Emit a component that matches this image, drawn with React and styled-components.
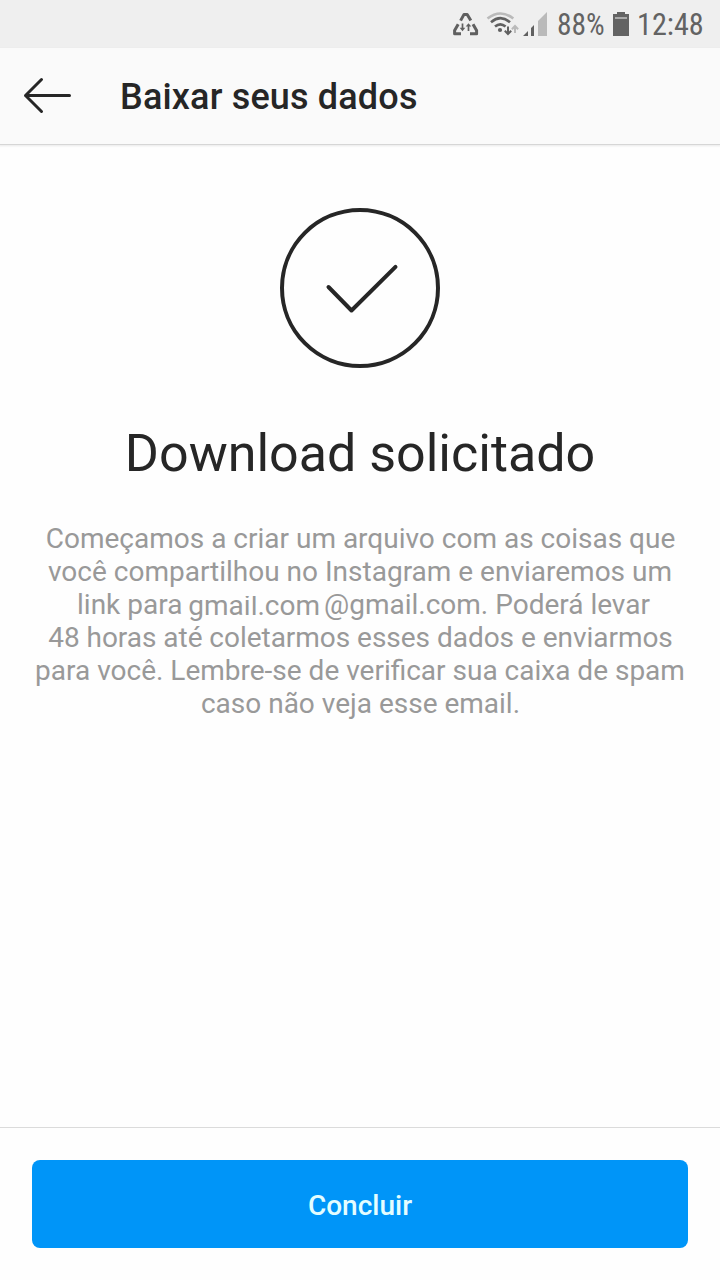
import React from "react";
import styled, { createGlobalStyle } from "styled-components";

const GlobalStyle = createGlobalStyle`
  *, *::before, *::after { box-sizing: border-box; }
  body {
    margin: 0;
    background: #fefefe;
    color: #262626;
    font-family: Roboto, "Liberation Sans", sans-serif;
  }
`;

const Screen = styled.div`
  display: flex;
  flex-direction: column;
  width: 720px;
  height: 1280px;
  overflow: hidden;
`;

const StatusBar = styled.div`
  display: flex;
  align-items: center;
  flex: none;
  height: 48px;
  padding-left: 448px;
  background: #efefef;
  color: #636363;
`;

const StatusIcons = styled.svg`
  display: block;
  flex: none;
  width: 102px;
  height: 48px;
`;

const StatusText = styled.span`
  flex: none;
  width: ${(p) => p.$width}px;
  margin-left: ${(p) => p.$gap}px;
  padding-top: 1px;
  font-family: "Roboto Condensed", Roboto, sans-serif;
  font-size: 31px;
  line-height: 48px;
  white-space: nowrap;
  transform: scaleX(${(p) => p.$scale});
  transform-origin: left center;
`;

const BatteryIcon = styled.svg`
  display: block;
  flex: none;
  width: 18px;
  height: 48px;
  margin-left: 8px;
`;

const Header = styled.header`
  display: flex;
  align-items: center;
  flex: none;
  height: 96px;
  padding-left: 22px;
  background: #fafafa;
  box-shadow: 0 1px 0 #d6d6d6, 0 1px 2px 1px #e9e9e9;
`;

const BackIcon = styled.svg`
  display: block;
  width: 50px;
  height: 96px;
`;

const Title = styled.h1`
  margin: 0 0 0 48px;
  padding-top: 2px;
  font-size: 36px;
  font-weight: 500;
  line-height: 42px;
  letter-spacing: 0.17px;
`;

const Content = styled.main`
  display: flex;
  flex-direction: column;
  align-items: center;
  flex: 1;
  padding-top: 64px;
`;

const CheckIcon = styled.svg`
  display: block;
  width: 160px;
  height: 160px;
`;

const Heading = styled.h2`
  margin: 55px 0 0;
  font-size: 52px;
  font-weight: 400;
  line-height: 62px;
`;

const Message = styled.p`
  margin: 37px 0 0;
  color: #999;
  font-size: 28px;
  line-height: 33px;
  text-align: center;
  white-space: nowrap;
`;

const MessageLine = styled.span`
  display: block;
  padding-left: ${(p) => p.$indent || 0}px;
  letter-spacing: ${(p) => p.$tracking || 0}px;
`;

const Recipient = styled.span`
  display: inline-block;
  margin: 0 4px 0 -1px;
  line-height: 33px;
  vertical-align: top;
  transform: translateY(1px);
  clip-path: inset(7px 0 0 0);
`;

const Footer = styled.footer`
  flex: none;
  height: 153px;
  padding: 32px 32px 0;
  border-top: 1px solid #dbdbdb;
`;

const DoneButton = styled.button`
  display: block;
  width: 100%;
  height: 88px;
  padding: 3px 0 0;
  border: 0;
  border-radius: 8px;
  background: #0095f8;
  color: #e4fdff;
  font: 500 28px/33px Roboto, sans-serif;
`;

export default function App() {
  return (
    <Screen>
      <GlobalStyle />
      <StatusBar>
        <StatusIcons viewBox="448 0 102 48" fill="none" stroke="#606060">
          <g strokeWidth="3" strokeLinejoin="round">
            <path d="M460.6 20.6L464 14.4H467.2L470.8 20.6" />
            <path d="M458.2 24.2L454.6 30.6V33.8H461" />
            <path d="M473 24.2L476.6 30.6V33.8H470" />
          </g>
          <path d="M462.5 23.5V29M468.5 26V31" strokeWidth="1.7" />
          <path d="M459.7 27.8H465.3L462.5 31.2ZM465.7 26.6H471.3L468.5 23.2Z" fill="#606060" stroke="none" />
          <path d="M487.5 18.5Q500.5 8.5 513.3 18.5" stroke="#bababa" strokeWidth="2.6" />
          <path d="M491 22.2Q500.5 14.2 510 22.2M495 26.6Q500.3 22.2 505.6 26.6" strokeWidth="2.6" />
          <circle cx="500" cy="30" r="2.1" fill="#606060" stroke="none" />
          <path d="M508 26.5V33M504.8 30.7L508 34L511.2 30.7" strokeWidth="2" />
          <path d="M515 33V27M511.9 29.3L515 26L518.1 29.3" stroke="#bababa" strokeWidth="2" />
          <path d="M523 36L528 31V36ZM531 28L534 25V36H531Z" fill="#606060" stroke="none" />
          <path d="M538 21L547 12V36H538Z" fill="#bababa" stroke="none" />
        </StatusIcons>
        <StatusText $gap={7} $width={48} $scale={0.95}>88%</StatusText>
        <BatteryIcon viewBox="0 0 18 48">
          <path d="M0 14H4V12H12V14H16V36H0V14Z" fill="#636363" />
          <path d="M2 18H14" stroke="#aaa" strokeWidth="2" />
        </BatteryIcon>
        <StatusText $gap={6} $width={70} $scale={0.975}>12:48</StatusText>
      </StatusBar>
      <Header>
        <BackIcon viewBox="22 48 50 96" fill="none" stroke="#262626" strokeWidth="3" strokeLinecap="round" strokeLinejoin="round">
          <path d="M69.5 95.5H25.5M41.5 79.5L25.5 95.5L41.5 111.5" />
        </BackIcon>
        <Title>Baixar seus dados</Title>
      </Header>
      <Content>
        <CheckIcon viewBox="280 208 160 160" fill="none" stroke="#262626" strokeWidth="4" strokeLinecap="round">
          <circle cx="360" cy="288" r="78" />
          <path d="M328.5 287L351.5 310.5L395.5 266.8" strokeLinejoin="round" />
        </CheckIcon>
        <Heading>Download solicitado</Heading>
        <Message>
          <MessageLine $indent={1}>Começamos a criar um arquivo com as coisas que</MessageLine>
          <MessageLine>você compartilhou no Instagram e enviaremos um</MessageLine>
          <MessageLine $indent={7}>
            link para <Recipient>gmail.com</Recipient>@gmail.com. Poderá levar
          </MessageLine>
          <MessageLine $indent={1} $tracking={-0.03}>48 horas até coletarmos esses dados e enviarmos</MessageLine>
          <MessageLine>para você. Lembre-se de verificar sua caixa de spam</MessageLine>
          <MessageLine $indent={1}>caso não veja esse email.</MessageLine>
        </Message>
      </Content>
      <Footer>
        <DoneButton>Concluir</DoneButton>
      </Footer>
    </Screen>
  );
}
